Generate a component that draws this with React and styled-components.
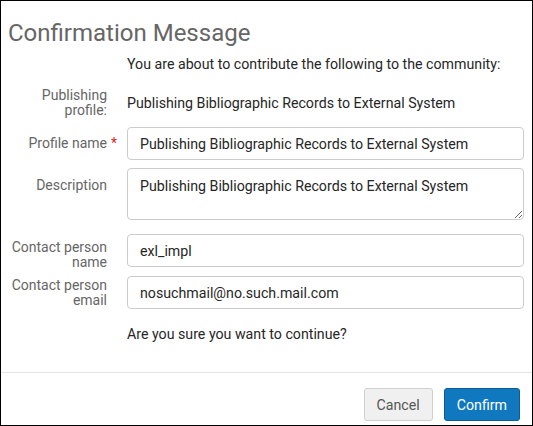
import React from 'react';
import styled, { createGlobalStyle } from 'styled-components';

const GlobalStyle = createGlobalStyle`
  html, body {
    margin: 0;
    padding: 0;
    background: #fff;
  }
  body {
    font-family: Roboto, "Liberation Sans", Arial, sans-serif;
  }
`;

const Dialog = styled.div`
  width: 533px;
  height: 426px;
  box-sizing: border-box;
  border: 1px solid #000;
  display: flex;
  flex-direction: column;
  background: #fff;
`;

const Title = styled.h1`
  margin: 0;
  padding: 18px 0 0 7px;
  font-size: 24px;
  font-weight: 400;
  line-height: 28px;
  color: #666;
`;

const Body = styled.div`
  flex: 1;
  display: grid;
  grid-template-columns: 98px 397px;
  column-gap: 20px;
  padding: 7px 0 0 8px;
  align-content: start;
`;

const Intro = styled.div`
  grid-column: 2;
  font-size: 14.2px;
  line-height: 20px;
  color: #262626;
  margin-bottom: ${(p) => p.bottom || 0}px;
  margin-top: ${(p) => p.top || 0}px;
`;

const Label = styled.label`
  grid-column: 1;
  text-align: right;
  font-size: 14px;
  line-height: 15px;
  color: #666;
  align-self: ${(p) => (p.top ? 'start' : 'center')};
  padding-top: ${(p) => p.top || 0}px;
`;

const Required = styled.span`
  display: inline-block;
  width: 6px;
  color: #d9262b;
  margin-left: 4px;
  margin-right: -10px;
`;

const Value = styled.div`
  grid-column: 2;
  align-self: center;
  font-size: 14.2px;
  color: #262626;
  line-height: 20px;
`;

const Field = styled.div`
  grid-column: 2;
  margin-top: ${(p) => p.offset || 0}px;
  margin-bottom: ${(p) => p.gap}px;
  display: flex;
`;

const Input = styled.input`
  box-sizing: border-box;
  width: 100%;
  height: 33px;
  padding: 0 12px;
  border: 1px solid #ccc;
  border-radius: 4px;
  font-family: inherit;
  font-size: 14.2px;
  color: #262626;
  background: #fff;
  outline: none;
`;

const TextArea = styled.textarea`
  box-sizing: border-box;
  width: 100%;
  height: 52px;
  padding: 7px 12px;
  border: 1px solid #ccc;
  border-radius: 4px;
  font-family: inherit;
  font-size: 14.2px;
  line-height: 20px;
  color: #262626;
  background: #fff;
  outline: none;
  resize: vertical;
`;

const Footer = styled.div`
  border-top: 1px solid #e5e5e5;
  display: flex;
  justify-content: flex-end;
  gap: 11px;
  padding: 15px 12px 0 0;
  height: 53px;
  box-sizing: border-box;
`;

const Button = styled.button`
  height: 33px;
  padding: 0 12px;
  border-radius: 3px;
  font-family: inherit;
  font-size: 14.2px;
  border: 1px solid ${(p) => (p.primary ? '#0b5e95' : '#cfcfcf')};
  background: ${(p) => (p.primary ? '#0f78bf' : '#f0f0f0')};
  color: ${(p) => (p.primary ? '#fff' : '#555')};
  cursor: pointer;
`;

const profile = 'Publishing Bibliographic Records to External System';

export default function App() {
  return (
    <>
      <GlobalStyle />
      <Dialog>
        <Title>Confirmation Message</Title>
        <Body>
          <Intro bottom={14}>You are about to contribute the following to the community:</Intro>

          <Label>Publishing<br />profile:</Label>
          <Value>{profile}</Value>

          <Label>Profile name<Required>*</Required></Label>
          <Field offset={9} gap={8}>
            <Input readOnly value={profile} />
          </Field>

          <Label top={10}>Description</Label>
          <Field gap={14}>
            <TextArea readOnly value={profile} />
          </Field>

          <Label>Contact person<br />name</Label>
          <Field gap={9}>
            <Input readOnly value="exl_impl" />
          </Field>

          <Label>Contact person<br />email</Label>
          <Field gap={0}>
            <Input readOnly value="nosuchmail@no.such.mail.com" />
          </Field>

          <Intro top={15}>Are you sure you want to continue?</Intro>
        </Body>
        <Footer>
          <Button>Cancel</Button>
          <Button primary>Confirm</Button>
        </Footer>
      </Dialog>
    </>
  );
}
